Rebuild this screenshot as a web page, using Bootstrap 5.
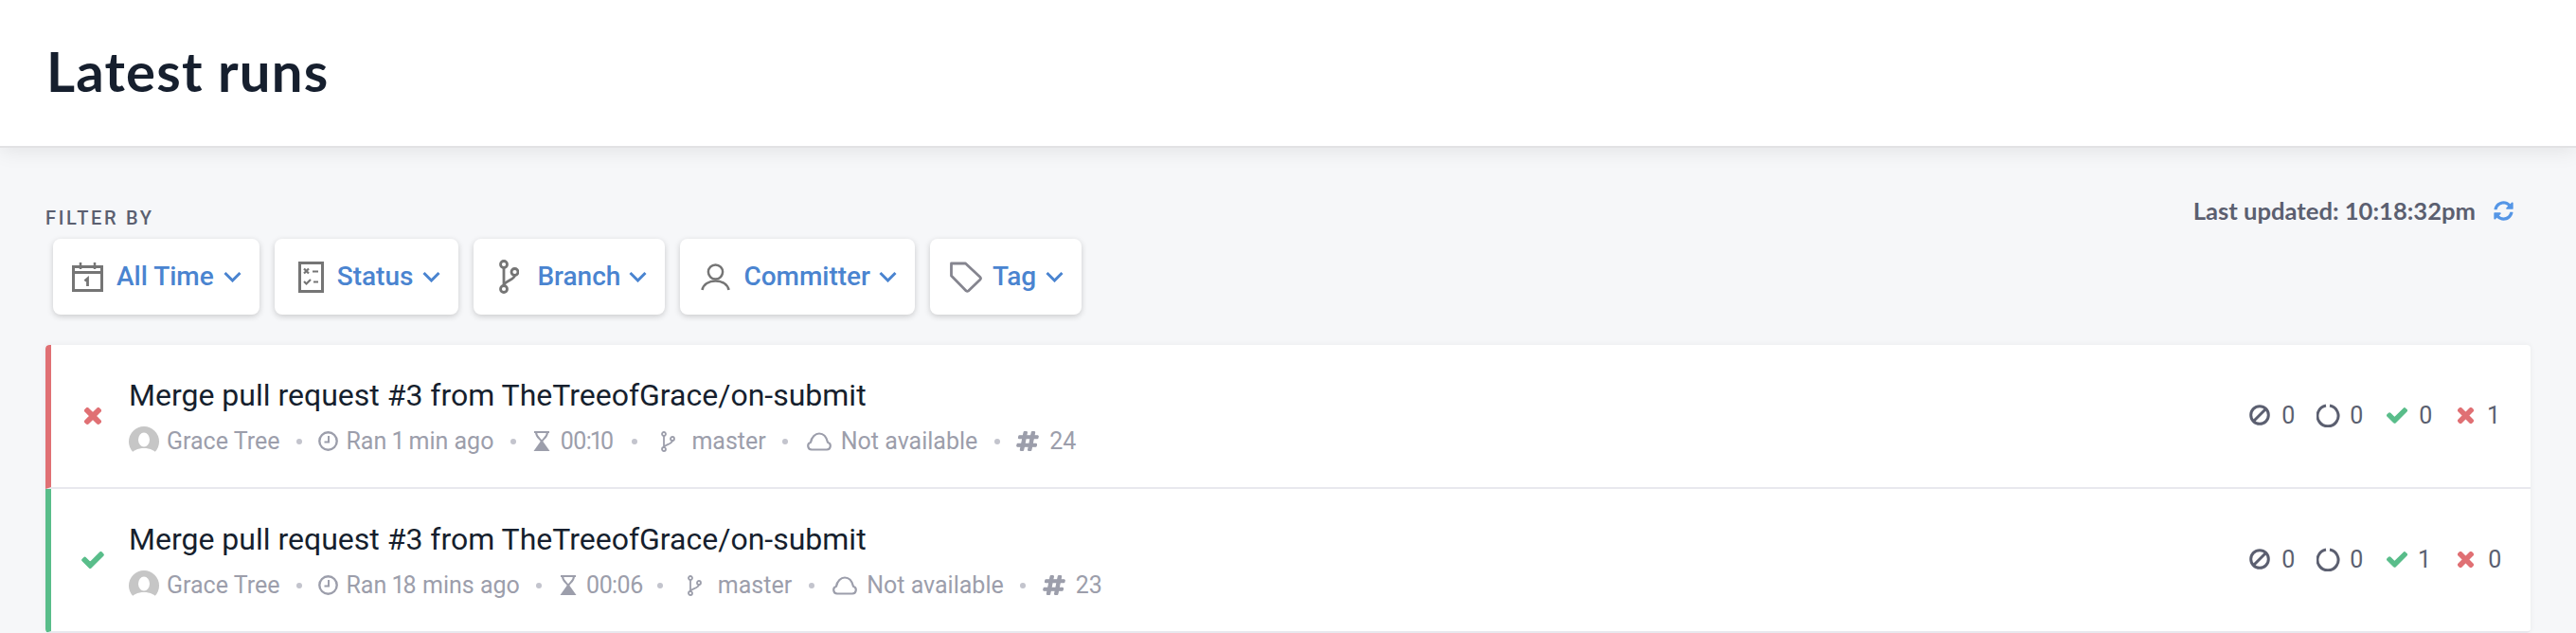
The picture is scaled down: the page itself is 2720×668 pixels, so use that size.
<!DOCTYPE html>
<html lang="en"><head><meta charset="utf-8"><title>Latest runs</title>
<link href="https://cdn.jsdelivr.net/npm/bootstrap@5.3.0/dist/css/bootstrap.min.css" rel="stylesheet">
<style>
body{background:#f6f7f9;font-family:Roboto,sans-serif;color:#161f2e}
.top-head{height:156px;background:#fff;border-bottom:2px solid #e2e2e4;box-shadow:0 4px 20px rgba(0,0,0,.08);padding:0 48px 4px 49px}
.top-head h1{font:700 58px/1 Lato,sans-serif;letter-spacing:1.2px;margin:0;color:#161f2e}
.page-body{padding:0 48px}
.filter-zone{height:208px}
.filter-label{font:500 20px/24px Roboto,sans-serif;letter-spacing:2.7px;color:#5b5f70;padding-top:62px;margin:0}
.filter-row{padding:10px 0 0 8px;gap:16px}
.filter-btn{height:80px;background:#fff;border:0;border-radius:8px;box-shadow:0 2px 6px rgba(0,0,0,.18);padding:0 19px 0 20px;font:500 28px/1 Roboto,sans-serif;color:#4a84d0}
.filter-btn:hover{background:#fff;color:#4a84d0}
.filter-btn svg{display:block;flex:none}
.chev{margin-left:10px;width:19px;height:12px}
.last-up{font:700 25.6px/1 Lato,sans-serif;color:#5b5f70;padding-top:54px}
.last-up svg{margin-left:19px}
.run-list{border:0;border-radius:4px;box-shadow:0 0 6px rgba(0,0,0,.06);overflow:hidden}
.run-row{height:152px;border:0;border-bottom:2px solid #e8e8ee;border-left:6px solid;padding:0 32px 0 0;background:#fff;display:flex;align-items:center}
.run-fail{border-left-color:#e07074}
.run-ok{border-left-color:#59bd8a}
.stat-cell{width:82px;flex:none;display:flex;justify-content:center;padding-left:6px}
.run-title{font:400 32px/38px Roboto,sans-serif;color:#161f2e;margin:0 0 14px}
.run-meta{font:400 25px/32px Roboto,sans-serif;font-variant-numeric:proportional-nums;color:#9c9eab;height:32px;margin-bottom:-1px}
.run-meta svg{display:block;flex:none}
.sep{width:6px;height:6px;border-radius:50%;background:#c3c4cd;margin:0 17.5px;flex:none}
.avatar-dot{width:32px;height:32px;margin-right:8px}
.ic-clock{margin-right:8px}
.ic-glass{margin:0 10px 0 1px}
.dur{width:58px;letter-spacing:-.9px}
.ic-branch{margin:0 17px 0 8px}
.ic-cloud{margin:0 10px 0 2px}
.ic-hash{margin-right:11px}
.stat-group{font:400 25px/1 Roboto,sans-serif;font-variant-numeric:proportional-nums;color:#5b5f70;gap:24px;margin-top:-2px}
.stat-group svg{display:block;margin-right:12px}
.stat-group>div:nth-child(3){margin-left:2px}
.stat-group>div:nth-child(4){margin-left:4px}
.stat-num{width:13px}
</style></head><body>
<header class="top-head d-flex align-items-center"><h1>Latest runs</h1></header>
<main class="page-body">
<div class="filter-zone d-flex justify-content-between align-items-start">
<div>
<p class="filter-label text-uppercase">Filter by</p>
<div class="filter-row d-flex">
<button class="btn filter-btn d-flex align-items-center" type="button">
<svg width="33" height="32" viewBox="0 0 33 32" fill="none" stroke="#757575" stroke-width="3" style="margin-right:14px"><path d="M1.500 5.500h30v25h-30zM1.500 11.500h30"/><path d="M9 1v7M24 1v7" stroke-width="2.500"/><path d="M13.500 20.500l3-2.500v8" stroke-width="2.800"/></svg><span>All Time</span><svg class="chev" viewBox="0 0 19 12" fill="none" stroke="#4a84d0" stroke-width="3"><path d="M1.500 2l8 8 8-8"/></svg></button>
<button class="btn filter-btn d-flex align-items-center" type="button">
<svg width="27" height="33" viewBox="0 0 27 33" fill="none" stroke="#757575" stroke-width="3" style="margin:0 14px 0 5px"><path d="M1.500 1.500h24v30h-24z"/><path d="M6 7.500l5 5M11 7.500l-5 5M15 10.500h6M6 21l2.500 2.500L13 19M16 21.500h5" stroke-width="2.200"/></svg><span>Status</span><svg class="chev" viewBox="0 0 19 12" fill="none" stroke="#4a84d0" stroke-width="3"><path d="M1.500 2l8 8 8-8"/></svg></button>
<button class="btn filter-btn d-flex align-items-center" type="button">
<svg width="21" height="36" viewBox="0 0 21 36" fill="none" stroke="#757575" stroke-width="2.800" style="margin:0 19px 0 7px"><circle cx="5" cy="5" r="3.500"/><circle cx="5" cy="31" r="3.500"/><circle cx="16.500" cy="13" r="3.500"/><path d="M5 8.500v19M16.500 16.500c0 5-11.500 6-11.500 11"/></svg><span>Branch</span><svg class="chev" viewBox="0 0 19 12" fill="none" stroke="#4a84d0" stroke-width="3" style="margin-left:9px"><path d="M1.500 2l8 8 8-8"/></svg></button>
<button class="btn filter-btn d-flex align-items-center" type="button">
<svg width="31" height="29" viewBox="0 0 31 29" fill="none" stroke="#757575" stroke-width="2.500" style="margin:0 14px 0 2px"><circle cx="15.500" cy="9" r="7.600"/><path d="M1.500 28c1-6 7-9.500 14-9.500s13 3.500 14 9.500"/></svg><span>Committer</span><svg class="chev" viewBox="0 0 19 12" fill="none" stroke="#4a84d0" stroke-width="3" style="margin-left:9px"><path d="M1.500 2l8 8 8-8"/></svg></button>
<button class="btn filter-btn d-flex align-items-center" type="button">
<svg width="34" height="33" viewBox="0 0 34 33" fill="none" stroke="#85858f" stroke-width="2.800" stroke-linejoin="round" style="margin:0 11px 0 1px"><path d="M1.500 2h15l15.500 14.500c.8 1 .8 1.500 0 2.500L19.500 31c-.8.600-1.500.600-2.300 0L1.500 15z"/></svg><span>Tag</span><svg class="chev" viewBox="0 0 19 12" fill="none" stroke="#4a84d0" stroke-width="3"><path d="M1.500 2l8 8 8-8"/></svg></button>
</div></div>
<div class="last-up d-flex align-items-center"><span>Last updated: 10:18:32pm</span><svg width="21" height="21" viewBox="0 0 512 512" fill="#5596e6" style="margin-right:18px"><path d="M370.72 133.28C339.458 104.008 298.888 87.962 255.848 88c-77.458.068-144.328 53.178-162.791 126.85-1.344 5.363-6.122 9.15-11.651 9.15H24.103c-7.498 0-13.194-6.807-11.807-14.176C33.933 94.924 134.813 8 256 8c66.448 0 126.791 26.136 171.315 68.685L463.03 40.97C478.149 25.851 504 36.559 504 57.941V192c0 13.255-10.745 24-24 24H345.941c-21.382 0-32.09-25.851-16.971-40.971l41.75-41.749zM32 296h134.059c21.382 0 32.09 25.851 16.971 40.971l-41.75 41.75c31.262 29.273 71.835 45.319 114.876 45.28 77.418-.07 144.315-53.144 162.787-126.849 1.344-5.363 6.122-9.15 11.651-9.15h57.304c7.498 0 13.194 6.807 11.807 14.176C478.067 417.076 377.187 504 256 504c-66.448 0-126.791-26.136-171.315-68.685L48.97 471.03C33.851 486.149 8 475.441 8 454.059V320c0-13.255 10.745-24 24-24z"/></svg></div>
</div>
<div class="list-group run-list" id="lst"></div>
</main>
<template id="tpl">
<div class="list-group-item run-row">
<div class="stat-cell" data-s></div>
<div class="flex-grow-1">
<p class="run-title"><span>Merge pull request #3 from TheTreeofGrace/on-submit</span></p>
<div class="run-meta d-flex align-items-center">
<svg class="avatar-dot" viewBox="0 0 32 32"><circle cx="16" cy="16" r="16" fill="#c6c6c6"/><ellipse cx="16" cy="14" rx="6" ry="7.500" fill="#fff"/><path d="M1 32c2-7 9-9 15-9s13 2 15 9z" fill="#fff"/></svg>
<span>Grace Tree</span><i class="sep"></i>
<svg class="ic-clock" width="21" height="21" viewBox="0 0 21 21" fill="none" stroke="#9c9eab" stroke-width="2.400"><circle cx="10.500" cy="10.500" r="9.200"/><path d="M11 5v6.500H6.500" stroke-width="2"/></svg>
<span data-t></span><i class="sep"></i>
<svg class="ic-glass" width="18" height="21" viewBox="0 0 18 21" fill="none" stroke="#9c9eab" stroke-width="2"><path d="M1 1h16M3 1c0 6 5 7 5.500 9.500M15 1c0 6-5 7-5.500 9.500"/><path d="M9 9L17.500 21H.5z" fill="#9c9eab" stroke="none"/></svg>
<span class="dur" data-d></span><i class="sep"></i>
<svg class="ic-branch" width="15" height="22" viewBox="0 0 15 22" fill="none" stroke="#9c9eab" stroke-width="1.800"><circle cx="3" cy="3" r="2"/><circle cx="3" cy="19" r="2"/><circle cx="12" cy="8" r="2"/><path d="M3 5v12M12 10c0 4-9 4-9 7"/></svg>
<span>master</span><i class="sep"></i>
<svg class="ic-cloud" width="26" height="20" viewBox="0 0 26 20" fill="none" stroke="#9c9eab" stroke-width="2.200"><path d="M6 18.500H5a4 4 0 0 1-1-7.800C5 5 9 1.500 13 1.500c4 0 7.500 3 9 9.200a4 4 0 0 1-1 7.800z"/></svg>
<span>Not available</span><i class="sep"></i>
<svg class="ic-hash" width="24" height="21" viewBox="-15 20 478 472" preserveAspectRatio="none" fill="#9c9eab" stroke="#9c9eab" stroke-width="24"><path d="M440.667 182.109l7.143-40c1.313-7.355-4.342-14.109-11.813-14.109h-74.81l14.623-81.891C377.123 38.754 371.468 32 363.997 32h-40.632a12 12 0 0 0-11.813 9.891L296.175 128H197.54l14.623-81.891C213.477 38.754 207.822 32 200.35 32h-40.632a12 12 0 0 0-11.813 9.891L132.528 128H53.432a12 12 0 0 0-11.813 9.891l-7.143 40C33.163 185.246 38.818 192 46.289 192h74.81L98.242 320H19.146a12 12 0 0 0-11.813 9.891l-7.143 40C-1.123 377.246 4.532 384 12.003 384h74.81L72.19 465.891C70.877 473.246 76.532 480 84.003 480h40.632a12 12 0 0 0 11.813-9.891L151.826 384h98.634l-14.623 81.891C234.523 473.246 240.178 480 247.65 480h40.632a12 12 0 0 0 11.813-9.891L315.472 384h79.096a12 12 0 0 0 11.813-9.891l7.143-40c1.313-7.355-4.342-14.109-11.813-14.109h-74.81l22.857-128h79.096a12 12 0 0 0 11.813-9.891zM261.889 320h-98.634l22.857-128h98.634l-22.857 128z"/></svg>
<span data-n></span>
</div></div>
<div class="stat-group d-flex align-items-center"></div>
</div>
</template>
<script>
const X=(w,h)=>`<svg width="${w}" height="${h}" viewBox="-15 65 382 382" fill="#e07074" stroke="#e07074" stroke-width="30"><path d="M242.72 256l100.07-100.07c12.28-12.28 12.28-32.19 0-44.48l-22.24-22.24c-12.28-12.28-32.19-12.28-44.48 0L176 189.28 75.93 89.21c-12.28-12.28-32.19-12.28-44.48 0L9.21 111.45c-12.28 12.28-12.28 32.19 0 44.48L109.28 256 9.21 356.07c-12.28 12.28-12.28 32.19 0 44.48l22.24 22.24c12.28 12.28 32.2 12.28 44.48 0L176 322.72l100.07 100.07c12.28 12.28 32.2 12.28 44.48 0l22.24-22.24c12.28-12.28 12.28-32.19 0-44.48L242.72 256z"/></svg>`;
const C=(w,h)=>`<svg width="${w}" height="${h}" viewBox="-15 49 542 414" fill="#59bd8a" stroke="#59bd8a" stroke-width="30"><path d="M173.898 439.404l-166.4-166.4c-9.997-9.997-9.997-26.206 0-36.204l36.203-36.204c9.997-9.998 26.207-9.998 36.204 0L192 312.69 432.095 72.596c9.997-9.997 26.207-9.997 36.204 0l36.203 36.204c9.997 9.997 9.997 26.206 0 36.204l-294.4 294.401c-9.998 9.997-26.207 9.997-36.204-.001z"/></svg>`;
const B=`<svg width="22" height="22" viewBox="0 0 22 22" fill="none" stroke="#5b5f70" stroke-width="3"><circle cx="11" cy="11" r="9.300"/><path d="M5 17L17 5"/></svg>`;
const R=`<svg width="25" height="25" viewBox="0 0 25 25" fill="none" stroke="#5b5f70" stroke-width="3" style="margin-right:10px"><path d="M14 2a11 11 0 1 1-4 0"/></svg>`;
const XS=X(17,17).replace('<svg','<svg style="margin-right:15px"');
[[0,'Ran 1 min ago','00:10','24',0,1],[1,'Ran 18 mins ago','00:06','23',1,0]].forEach(r=>{
 const n=document.getElementById('tpl').content.cloneNode(true),e=n.firstElementChild;
 e.classList.add(r[0]?'run-ok':'run-fail');
 e.querySelector('[data-s]').innerHTML=r[0]?C(24,18):X(18,18);
 e.querySelector('[data-t]').textContent=r[1];e.querySelector('[data-d]').textContent=r[2];e.querySelector('[data-n]').textContent=r[3];
 e.querySelector('.stat-group').innerHTML=[[B,0],[R,0],[C(22,17),r[4]],[XS,r[5]]].map(a=>`<div class="d-flex align-items-center">${a[0]}<span class="stat-num">${a[1]}</span></div>`).join('');
 document.getElementById('lst').appendChild(n);
});
</script>
<script src="https://cdn.jsdelivr.net/npm/bootstrap@5.3.0/dist/js/bootstrap.bundle.min.js"></script>
</body></html>
